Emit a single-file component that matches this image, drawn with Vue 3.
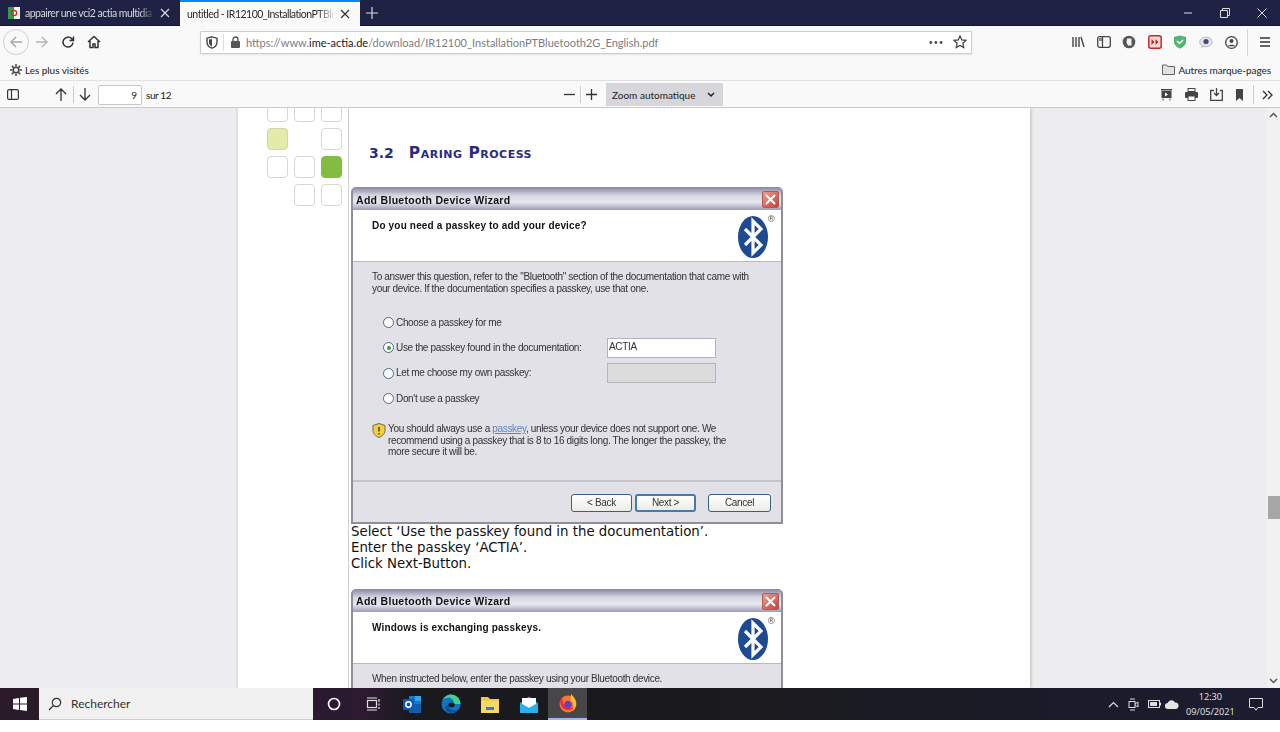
<script setup>
const gridRows = [
  ['', '', ''],
  ['pale', 'none', ''],
  ['', '', 'green'],
  ['none', '', '']
]
const radios = [
  { label: 'Choose a passkey for me', on: false },
  { label: 'Use the passkey found in the documentation:', on: true, field: 'ACTIA' },
  { label: 'Let me choose my own passkey:', on: false, field: '', off: true },
  { label: "Don't use a passkey", on: false }
]
</script>

<template>
  <div class="screen">
    <svg width="0" height="0" class="defs">
      <symbol id="bt" viewBox="0 0 44 48">
        <ellipse cx="16" cy="24" rx="15" ry="21" fill="#1d4a90" />
        <path d="M8 16 L24 32 L16 40 L16 8 L24 16 L8 32" fill="none" stroke="#fff" stroke-width="3.2" />
      </symbol>
    </svg>

    <!-- tab strip -->
    <div class="tabs">
      <div class="tab">
        <svg class="fav" width="12" height="12" viewBox="0 0 12 12">
          <rect width="6" height="12" fill="#2f9e4a" />
          <rect x="6" width="6" height="12" fill="#f4f4f4" />
          <circle cx="6" cy="6" r="2.6" fill="none" stroke="#d8232a" stroke-width="1.3" />
        </svg>
        <span class="tab-title">appairer une vci2 actia multidia</span>
        <svg class="tab-x" width="10" height="10" viewBox="0 0 10 10"><path d="M1 1l8 8M9 1l-8 8" stroke="#d8d8de" stroke-width="1.2" /></svg>
      </div>
      <div class="tab active">
        <span class="tab-title">untitled - IR12100_InstallationPTBlu</span>
        <svg class="tab-x" width="10" height="10" viewBox="0 0 10 10"><path d="M1 1l8 8M9 1l-8 8" stroke="#333" stroke-width="1.2" /></svg>
      </div>
      <svg class="newtab" width="12" height="12" viewBox="0 0 12 12"><path d="M6 0v12M0 6h12" stroke="#d8d8de" stroke-width="1.2" /></svg>
      <div class="win">
        <svg width="10" height="10" viewBox="0 0 10 10"><path d="M1 5h8" stroke="#ddd" /></svg>
        <svg width="10" height="10" viewBox="0 0 10 10"><path d="M.5 2.5h7v7h-7zM2.5 2.5v-2h7v7h-2" fill="none" stroke="#ddd" /></svg>
        <svg width="10" height="10" viewBox="0 0 10 10"><path d="M.5.5l9 9M9.5.5l-9 9" stroke="#ddd" /></svg>
      </div>
    </div>

    <!-- navigation -->
    <div class="nav">
      <div class="back">
        <svg width="14" height="14" viewBox="0 0 14 14"><path d="M13 7H2M7 2L2 7l5 5" fill="none" stroke="#a8a8ab" stroke-width="1.4" /></svg>
      </div>
      <div class="nav-btn">
        <svg width="14" height="14" viewBox="0 0 14 14"><path d="M1 7h11M7 2l5 5-5 5" fill="none" stroke="#b4b4b6" stroke-width="1.4" /></svg>
      </div>
      <div class="nav-btn">
        <svg width="14" height="14" viewBox="0 0 14 14"><path d="M12 7.5A5 5 0 1 1 10.4 3.4L12.5 5.5M12.5 1.5v4h-4" fill="none" stroke="#333" stroke-width="1.5" /></svg>
      </div>
      <div class="nav-btn">
        <svg width="14" height="14" viewBox="0 0 14 14"><path d="M1 7l6-5.5L13 7M3 6v6.5h3V9h2v3.5h3V6" fill="none" stroke="#333" stroke-width="1.5" /></svg>
      </div>
      <div class="url">
        <svg class="u-shield" width="12" height="13" viewBox="0 0 12 13"><path d="M6 .8l5 1.4v4c0 3-2 5-5 6-3-1-5-3-5-6v-4z" fill="none" stroke="#444" stroke-width="1.4" /><path d="M6 3v7.5c-2-.8-3-2.2-3-4.2V3.6z" fill="#444" /></svg>
        <span class="u-div"></span>
        <svg class="u-lock" width="11" height="12" viewBox="0 0 11 12"><path d="M3 5V3.5a2.5 2.5 0 0 1 5 0V5" fill="none" stroke="#555" stroke-width="1.4" /><rect x="1" y="5" width="9" height="7" rx="1" fill="#555" /></svg>
        <span class="u-text">https://www.<b>ime-actia.de</b>/download/IR12100_InstallationPTBluetooth2G_English.pdf</span>
        <span class="u-dots">•••</span>
        <svg class="u-star" width="14" height="14" viewBox="0 0 14 14"><path d="M7 1l1.8 3.9 4.2.5-3.1 2.9.8 4.2L7 10.4l-3.7 2.1.8-4.2L1 5.4l4.2-.5z" fill="none" stroke="#444" stroke-width="1.3" /></svg>
      </div>
      <div class="nav-right">
        <svg width="13" height="12" viewBox="0 0 13 12"><path d="M1 1v10M4 1v10M7 1v10M9 1l3 10" stroke="#444" stroke-width="1.4" fill="none" /></svg>
        <svg width="14" height="12" viewBox="0 0 14 12"><rect x=".7" y=".7" width="12.6" height="10.6" rx="2" fill="none" stroke="#444" stroke-width="1.3" /><path d="M5.5 1v10" stroke="#444" stroke-width="1.3" /><rect x="2" y="2" width="3" height="3" fill="#888" /></svg>
        <svg width="14" height="14" viewBox="0 0 14 14"><circle cx="7" cy="7" r="6.3" fill="#555" /><path d="M5 3.5h4.5v7H6L4.5 7.5z" fill="#f4f4f4" /></svg>
        <svg width="14" height="14" viewBox="0 0 14 14"><rect x=".8" y=".8" width="12.4" height="12.4" rx="2" fill="#f3d9d9" stroke="#c32a2a" stroke-width="1.5" /><path d="M3.5 4l3 3-3 3zM7.5 4l3 3-3 3z" fill="#c32a2a" /></svg>
        <svg width="14" height="14" viewBox="0 0 14 14"><path d="M7 .5l6 1.6v4.4c0 3-2.4 5.6-6 7-3.6-1.4-6-4-6-7V2.1z" fill="#4fb56f" /><path d="M4 6l2.5 2.5L10 5" stroke="#fff" stroke-width="1.5" fill="none" /></svg>
        <svg width="14" height="13" viewBox="0 0 14 13"><ellipse cx="7" cy="6" rx="6.3" ry="4.8" fill="#e4e4e8" stroke="#bbb" /><circle cx="7" cy="5.5" r="2.6" fill="#3c4a80" /><path d="M3 9.5L2 12.5l3-2" fill="#bbb" /></svg>
        <svg width="13" height="13" viewBox="0 0 13 13"><circle cx="6.5" cy="6.5" r="5.8" fill="none" stroke="#444" stroke-width="1.3" /><circle cx="6.5" cy="5" r="2" fill="#444" /><path d="M2.8 10.3c.8-2 6.6-2 7.4 0" fill="#444" /></svg>
      </div>
      <span class="nav-div"></span>
      <svg class="burger" width="10" height="10" viewBox="0 0 10 10"><path d="M0 1h10M0 5h10M0 9h10" stroke="#333" stroke-width="1.4" /></svg>
    </div>

    <!-- bookmarks -->
    <div class="marks">
      <svg width="12" height="12" viewBox="0 0 12 12"><circle cx="6" cy="6" r="2.8" fill="none" stroke="#444" stroke-width="1.5" /><path d="M6 0v2.5M6 9.5V12M0 6h2.5M9.5 6H12M1.8 1.8l1.8 1.8M8.4 8.4l1.8 1.8M10.2 1.8L8.4 3.6M3.6 8.4l-1.8 1.8" stroke="#444" stroke-width="1.5" /></svg>
      <span class="m-text">Les plus visités</span>
      <svg class="m-folder" width="13" height="11" viewBox="0 0 13 11"><path d="M.5 10.5V1h4l1 1.5h7v8z" fill="#e2e2e2" stroke="#666" /></svg>
      <span class="m-text m-other">Autres marque-pages</span>
    </div>

    <!-- pdf.js toolbar -->
    <div class="pdfbar">
      <svg class="p-side" width="12" height="11" viewBox="0 0 12 11"><rect x=".6" y=".6" width="10.8" height="9.8" rx="1.5" fill="none" stroke="#333" stroke-width="1.2" /><path d="M4.5 1v9" stroke="#333" stroke-width="1.2" /></svg>
      <svg class="p-up" width="12" height="13" viewBox="0 0 12 13"><path d="M6 13V1M1 6l5-5 5 5" fill="none" stroke="#333" stroke-width="1.3" /></svg>
      <span class="p-div"></span>
      <svg width="12" height="13" viewBox="0 0 12 13"><path d="M6 0v12M1 7l5 5 5-5" fill="none" stroke="#333" stroke-width="1.3" /></svg>
      <span class="p-num">9</span>
      <span class="p-of">sur 12</span>
      <svg class="p-minus" width="11" height="11" viewBox="0 0 11 11"><path d="M0 5.5h11" stroke="#333" stroke-width="1.3" /></svg>
      <span class="p-div p-div2"></span>
      <svg class="p-plus" width="11" height="11" viewBox="0 0 11 11"><path d="M0 5.5h11M5.5 0v11" stroke="#333" stroke-width="1.3" /></svg>
      <div class="p-zoom">
        <span>Zoom automatique</span>
        <svg width="8" height="6" viewBox="0 0 8 6"><path d="M1 1l3 3 3-3" fill="none" stroke="#222" stroke-width="1.5" /></svg>
      </div>
      <div class="p-tools">
        <svg width="13" height="13" viewBox="0 0 13 13"><rect x="1" y="1" width="11" height="1.5" fill="#444" /><rect x="1.5" y="3" width="10" height="7" fill="#444" /><path d="M5 4.5l3 2-3 2z" fill="#fff" /><path d="M3 10.5v2M10 10.5v2" stroke="#444" /></svg>
        <svg width="13" height="13" viewBox="0 0 13 13"><rect x="3" y=".5" width="7" height="3" fill="none" stroke="#444" /><rect y="4" width="13" height="6" rx="1" fill="#444" /><rect x="3" y="8" width="7" height="4.5" fill="#fff" stroke="#444" /></svg>
        <svg width="13" height="13" viewBox="0 0 13 13"><path d="M4 2.5H.7v9.800h11.600V2.500H10" fill="none" stroke="#444" stroke-width="1.3" /><path d="M6.500 0v7M4 5l2.500 2.500L9 5" fill="none" stroke="#444" stroke-width="1.3" /></svg>
        <svg width="9" height="12" viewBox="0 0 9 12"><path d="M1 0h7v12L4.500 9 1 12z" fill="#444" /></svg>
      </div>
      <span class="p-div p-div3"></span>
      <svg class="p-more" width="11" height="10" viewBox="0 0 11 10"><path d="M1 1l4 4-4 4M6 1l4 4-4 4" fill="none" stroke="#333" stroke-width="1.3" /></svg>
    </div>

    <!-- document -->
    <div class="viewer">
      <div class="stage">
        <div class="page">
          <div class="cells">
            <template v-for="(row, r) in gridRows" :key="r">
              <span v-for="(c, i) in row" :key="i" class="cell" :class="c"></span>
            </template>
          </div>
          <div class="doc">
            <h2 class="heading"><span class="h-num">3.2</span><span class="h-text">Paring Process</span></h2>

            <div class="dialog">
              <div class="d-title">
                <span>Add Bluetooth Device Wizard</span>
                <span class="d-close"><svg width="11" height="11" viewBox="0 0 11 11"><path d="M1 1l9 9M10 1l-9 9" stroke="#fff" stroke-width="2" /></svg></span>
              </div>
              <div class="d-head">
                <b>Do you need a passkey to add your device?</b>
                <svg class="d-logo" width="44" height="48" viewBox="0 0 44 48"><use href="#bt" /></svg>
                <span class="d-reg">®</span>
              </div>
              <div class="d-body">
                <p class="d-intro">To answer this question, refer to the "Bluetooth" section of the documentation that came with<br />your device. If the documentation specifies a passkey, use that one.</p>
                <div class="d-radios">
                  <div v-for="o in radios" :key="o.label" class="d-radio">
                    <span class="dot" :class="{ on: o.on }"></span>
                    <span class="r-label">{{ o.label }}</span>
                    <span v-if="o.field !== undefined" class="field" :class="{ off: o.off }">{{ o.field }}</span>
                  </div>
                </div>
                <div class="d-note">
                  <svg width="14" height="15" viewBox="0 0 14 15"><path d="M7 .5l6 2v5c0 3-2.500 5.500-6 7-3.500-1.500-6-4-6-7v-5z" fill="#f2cf3b" stroke="#6b6b50" /><path d="M7 4v4.500M7 10v1.500" stroke="#444" stroke-width="1.5" /></svg>
                  <p>You should always use a <a>passkey</a>, unless your device does not support one. We<br />recommend using a passkey that is 8 to 16 digits long. The longer the passkey, the<br />more secure it will be.</p>
                </div>
              </div>
              <div class="d-foot">
                <span class="btn">&lt; Back</span>
                <span class="btn def">Next &gt;</span>
                <span class="btn cancel">Cancel</span>
              </div>
            </div>

            <p class="steps">Select ‘Use the passkey found in the documentation’.<br />Enter the passkey ‘ACTIA’.<br />Click Next-Button.</p>

            <div class="dialog second">
              <div class="d-title">
                <span>Add Bluetooth Device Wizard</span>
                <span class="d-close"><svg width="11" height="11" viewBox="0 0 11 11"><path d="M1 1l9 9M10 1l-9 9" stroke="#fff" stroke-width="2" /></svg></span>
              </div>
              <div class="d-head">
                <b>Windows is exchanging passkeys.</b>
                <svg class="d-logo" width="44" height="48" viewBox="0 0 44 48"><use href="#bt" /></svg>
                <span class="d-reg">®</span>
              </div>
              <div class="d-body">
                <p class="d-intro">When instructed below, enter the passkey using your Bluetooth device.</p>
              </div>
            </div>
          </div>
        </div>
      </div>
      <div class="scroll">
        <svg width="9" height="6" viewBox="0 0 9 6"><path d="M1 5l3.500-3.500L8 5" fill="none" stroke="#555" stroke-width="1.5" /></svg>
        <span class="thumb"></span>
        <svg class="s-down" width="9" height="6" viewBox="0 0 9 6"><path d="M1 1l3.500 3.500L8 1" fill="none" stroke="#555" stroke-width="1.5" /></svg>
      </div>
    </div>

    <!-- windows taskbar -->
    <div class="taskbar">
      <div class="start">
        <svg width="14" height="14" viewBox="0 0 14 14"><path d="M0 2l6-1v5.500H0zM7 .8L14 0v6.500H7zM0 7.500h6V13l-6-1zM7 7.500h7V14l-7-1z" fill="#fff" /></svg>
      </div>
      <div class="search">
        <svg width="14" height="14" viewBox="0 0 14 14"><circle cx="8.500" cy="5.500" r="4.200" fill="none" stroke="#333" stroke-width="1.2" /><path d="M5.500 8.500L1 13" stroke="#333" stroke-width="1.2" /></svg>
        <span>Rechercher</span>
      </div>
      <div class="apps">
        <span class="app"><svg width="14" height="14" viewBox="0 0 14 14"><circle cx="7" cy="7" r="5.500" fill="none" stroke="#fff" stroke-width="1.6" /></svg></span>
        <span class="app"><svg width="14" height="14" viewBox="0 0 14 14"><path d="M1 1h10M1 13h10" stroke="#ddd" stroke-width="1.2" /><rect x="1.500" y="3.500" width="9" height="7" fill="none" stroke="#ddd" stroke-width="1.2" /><path d="M13 2v3M13 6.500v2M13 10v2" stroke="#ddd" stroke-width="1.2" /></svg></span>
        <span class="app"><svg width="20" height="20" viewBox="0 0 20 20"><path d="M7 2h12v14H7z" fill="#1a76cf" /><path d="M13 2h6v5h-6z" fill="#35a8ea" /><path d="M7 10l12 0v9H7z" fill="#0f5fae" /><rect x="1" y="5" width="11" height="11" rx="1" fill="#0a5bb0" /><circle cx="6.500" cy="10.500" r="2.700" fill="none" stroke="#fff" stroke-width="1.5" /></svg></span>
        <span class="app"><svg width="20" height="20" viewBox="0 0 20 20"><circle cx="10" cy="10" r="9.500" fill="#1173c6" /><path d="M19.500 10c0-5-4-9.500-9.500-9.500C6 .5 3 3 1.500 6 4 3.500 9 3 11.500 5.500c1.500 1.500 1.500 3 1 4.500h7z" fill="#3fd28a" /><path d="M7 11c0 4 4 6 8 5 1-.3 2-.8 3-1.700-2 5-9 6-12.500 2.500C3.500 15 4 11 7 11z" fill="#0f4c97" /><ellipse cx="10.500" cy="11" rx="3.200" ry="2.400" fill="#1a1a1f" /></svg></span>
        <span class="app"><svg width="18" height="17" viewBox="0 0 18 17"><path d="M0 1h7l2 2h9v14H0z" fill="#f2c84b" /><rect y="5" width="18" height="12" fill="#f8d76c" /><rect x="5" y="11" width="8" height="3" fill="#2d82c4" /></svg></span>
        <span class="app"><svg width="20" height="17" viewBox="0 0 20 17"><path d="M1 7l9-6.500L19 7v10H1z" fill="#1e97da" /><path d="M3 2h14v6l-7 4-7-4z" fill="#fff" /><path d="M1 7l9 6 9-6v10H1z" fill="#2bb0ea" /></svg></span>
        <span class="app current"><svg width="20" height="20" viewBox="0 0 20 20"><circle cx="10" cy="11" r="8.500" fill="#f5792a" /><path d="M13 1c2 2 5 5 5 10 0 3-2 6-4 7 2-3 2-7 0-10-.5 1-1 1.500-2 1.500 1-3 1-6 1-8.500z" fill="#fdc033" /><circle cx="10" cy="11.500" r="3.800" fill="#6e3cc0" /><path d="M2 7c0 5 3 10 8 10 3 0 5-1 6-3-2 1.500-6 1.500-8 0-3-2-4-5-3-8z" fill="#e5284e" /></svg></span>
      </div>
      <div class="tray">
        <svg width="11" height="7" viewBox="0 0 11 7"><path d="M1 6l4.500-4.500L10 6" fill="none" stroke="#ddd" stroke-width="1.2" /></svg>
        <svg class="t-meet" width="11" height="15" viewBox="0 0 11 15"><rect x="1" y="4.500" width="6" height="6" fill="none" stroke="#ddd" /><path d="M7 7l3-2v5L7 8M2 2h5M2 13h5" stroke="#ddd" fill="none" /></svg>
        <svg width="13" height="8" viewBox="0 0 13 8"><rect x=".5" y=".5" width="11" height="7" fill="none" stroke="#ddd" /><rect x="2" y="2" width="7" height="4" fill="#ddd" /><rect x="12" y="2.500" width="1" height="3" fill="#ddd" /></svg>
        <svg class="t-cloud" width="14" height="9" viewBox="0 0 14 9"><path d="M3 9a3 3 0 0 1-.3-6A4 4 0 0 1 10 2.500 3.300 3.300 0 0 1 11 9z" fill="#e4e4e4" /></svg>
      </div>
      <div class="clock"><span>12:30</span><span>09/05/2021</span></div>
      <svg class="notif" width="14" height="13" viewBox="0 0 14 13"><path d="M.5.500h13v9H9L7 12.200 5 9.500H.5z" fill="none" stroke="#ddd" /></svg>
    </div>
  </div>
</template>

<style scoped>
.screen {
  width: 1280px;
  height: 720px;
  display: flex;
  flex-direction: column;
  overflow: hidden;
  font-family: Lato, "Open Sans", sans-serif;
  background: #f9f9fa;
  color: #222;
}
.defs { position: absolute; }
svg { flex: none; display: block; }

.tabs {
  height: 26px;
  flex: none;
  display: flex;
  align-items: center;
  background: #1f2244;
  border-bottom: 1px solid #14162e;
  box-sizing: border-box;
  font-size: 10.5px;
  letter-spacing: -.5px;
}
.tab {
  width: 180px;
  height: 26px;
  box-sizing: border-box;
  padding: 0 10px 0 8px;
  display: flex;
  align-items: center;
  color: #d6d6de;
}
.tab.active {
  padding-left: 7px;
  background: #f9f9fa;
  border-top: 2px solid #0a84ff;
  color: #2a2a2a;
}
.fav { margin-right: 5px; }
.tab-title {
  flex: 1;
  white-space: nowrap;
  overflow: hidden;
  -webkit-mask-image: linear-gradient(to right, #000 88%, transparent);
  mask-image: linear-gradient(to right, #000 88%, transparent);
}
.tab-x { margin-left: 5px; }
.newtab { margin-left: 6px; }
.win {
  margin-left: auto;
  display: flex;
  gap: 27px;
  padding-right: 13px;
}

.nav {
  height: 32px;
  flex: none;
  display: flex;
  align-items: center;
  padding-left: 3px;
}
.back {
  width: 26px;
  height: 26px;
  box-sizing: border-box;
  border: 1px solid #d0d0d4;
  border-radius: 50%;
  display: flex;
  align-items: center;
  justify-content: center;
}
.nav-btn {
  width: 26px;
  display: flex;
  justify-content: center;
}
.url {
  width: 772px;
  height: 23px;
  margin-left: 93px;
  box-sizing: border-box;
  background: #fff;
  border: 1px solid #cdcdd0;
  box-shadow: 0 1px 2px rgba(0, 0, 0, .08);
  border-radius: 1px;
  display: flex;
  align-items: center;
  padding-left: 5px;
  font-size: 11px;
  color: #7c7c80;
}
.u-div { width: 1px; height: 17px; background: #dcdcde; margin: 0 6px 0 5px; }
.u-text { margin-left: 5px; white-space: nowrap; }
.u-text b { font-weight: 400; color: #1a1a1a; }
.u-dots { margin-left: auto; font-size: 7px; letter-spacing: 1px; color: #444; }
.u-star { margin: 0 4px 0 9px; }
.nav-right {
  margin-left: 100px;
  width: 166px;
  display: flex;
  align-items: center;
  gap: 11.6px;
}
.nav-div { width: 1px; height: 27px; background: #d4d4d6; margin-left: 9px; }
.burger { margin-left: 12px; }

.marks {
  height: 23px;
  flex: none;
  display: flex;
  align-items: center;
  padding: 1px 0 0 10px;
  font-size: 10px;
  letter-spacing: -.05px;
  border-bottom: 1px solid #e0e0e2;
  box-sizing: border-box;
}
.m-text { margin-left: 3px; }
.m-folder { margin-left: auto; }
.m-other { margin-right: 9px; }

.pdfbar {
  height: 27px;
  flex: none;
  display: flex;
  align-items: center;
  padding: 1px 0 0 7px;
  font-size: 10px;
  border-bottom: 1px solid #c9c9cc;
  box-sizing: border-box;
}
.p-up { margin-left: 36px; }
.p-div { width: 1px; height: 17px; background: #ccc; margin: 0 5px 0 6px; }
.p-num {
  width: 44px;
  height: 20px;
  margin-left: 7px;
  box-sizing: border-box;
  border: 1px solid #c8c8ca;
  border-radius: 2px;
  background: #fff;
  text-align: right;
  padding-right: 4px;
  line-height: 18px;
}
.p-of { margin-left: 4px; width: 28px; white-space: nowrap; letter-spacing: -.4px; }
.p-minus { margin-left: 390px; }
.p-div2 { margin: 0 5px; }
.p-zoom {
  width: 117px;
  height: 23px;
  margin-left: 9px;
  box-sizing: border-box;
  background: #d7d7db;
  display: flex;
  align-items: center;
  justify-content: space-between;
  padding: 0 8px 0 6px;
}
.p-tools {
  margin-left: 437px;
  display: flex;
  align-items: center;
  gap: 12px;
}
.p-div3 { margin: 0 0 0 9px; height: 19px; }
.p-more { margin-left: 8px; }

.viewer {
  flex: 1;
  min-height: 0;
  display: flex;
  background: #ededf0;
}
.stage {
  flex: 1;
  min-width: 0;
  padding-left: 237px;
  overflow: hidden;
}
.page {
  width: 793px;
  height: 100%;
  box-sizing: border-box;
  background: #fff;
  border-left: 1px solid #dcdcde;
  box-shadow: 1px 0 3px rgba(0, 0, 0, .22);
  display: flex;
  overflow: hidden;
}
.cells {
  width: 80px;
  margin: -8px 0 0 29px;
  display: grid;
  grid-template-columns: repeat(3, 21px);
  grid-auto-rows: 22px;
  gap: 6px;
  align-content: start;
  flex: none;
}
.cell {
  border: 1px solid #d6d6d6;
  border-radius: 4px;
  background: #fff;
}
.cell.pale { background: #e2ebaa; border-color: #d0d6a8; }
.cell.green { background: #82bc42; border-color: #82bc42; }
.cell.none { visibility: hidden; }

.doc {
  margin-left: 1px;
  padding-left: 2px;
  border-left: 1px solid #cfcfcf;
  width: 440px;
  flex: none;
}
.heading {
  margin: 36px 0 25px 18px;
  font: 700 14px/18px "DejaVu Sans", Verdana, sans-serif;
  color: #2a2c82;
  white-space: nowrap;
}
.h-num { margin-right: 15px; }
.h-text {
  font-size: 15.5px;
  font-variant: small-caps;
  letter-spacing: .5px;
}

.dialog {
  width: 432px;
  box-sizing: border-box;
  border: 2px solid #8f8f9c;
  border-top-width: 1px;
  border-radius: 5px 5px 0 0;
  background: #e1e1e7;
  font: 10px/11.5px "Liberation Sans", Arial, sans-serif;
  letter-spacing: -.34px;
  color: #333;
  filter: blur(.3px);
}
.dialog.second { height: 140px; }
.d-title {
  height: 22px;
  box-sizing: border-box;
  padding: 1px 2px 0 3px;
  display: flex;
  align-items: center;
  justify-content: space-between;
  background: linear-gradient(#8f8faa, #d8d8e4 35%, #e8e8f0 65%, #9c9cb4);
  font: 700 10.5px "Liberation Sans", Tahoma, sans-serif;
  color: #111;
  letter-spacing: .3px;
}
.d-close {
  width: 17px;
  height: 17px;
  border-radius: 2px;
  background: linear-gradient(135deg, #e8a090, #c8403a);
  border: 1px solid #b05a50;
  box-sizing: border-box;
  display: flex;
  align-items: center;
  justify-content: center;
}
.d-head {
  height: 52px;
  box-sizing: border-box;
  background: #fff;
  border-bottom: 1px solid #b8b8c0;
  padding: 10px 0 0 19px;
  position: relative;
  font: 700 10px/12px "Liberation Sans", Tahoma, sans-serif;
  letter-spacing: .17px;
  color: #111;
}
.d-logo { position: absolute; right: 0; top: 3px; }
.d-reg {
  position: absolute;
  right: 5px;
  top: 4px;
  font: 9px/10px "DejaVu Sans", sans-serif;
  color: #666;
}
.d-body { padding: 9px 19px 0; }
.d-intro { margin: 0; white-space: nowrap; }
.d-radios { margin-top: 16px; padding-left: 11px; }
.d-radio {
  height: 25.3px;
  display: flex;
  align-items: center;
}
.dot {
  width: 11px;
  height: 11px;
  box-sizing: border-box;
  border: 1px solid #4a6a8a;
  border-radius: 50%;
  background: #fff;
  margin-right: 2px;
  display: flex;
  align-items: center;
  justify-content: center;
}
.dot.on::after {
  content: "";
  width: 4px;
  height: 4px;
  border-radius: 50%;
  background: #3a9a3a;
}
.r-label { white-space: nowrap; }
.field {
  width: 109px;
  height: 20px;
  margin-left: auto;
  margin-right: 46px;
  box-sizing: border-box;
  background: #fff;
  border: 1px solid #b4b4ba;
  padding: 2px 1px;
}
.field.off { background: #dcdcdc; }
.d-note {
  margin-top: 12px;
  display: flex;
  gap: 2px;
}
.d-note p { margin: 0; white-space: nowrap; }
.d-note a { color: #5a84c0; text-decoration: underline; }
.d-foot {
  margin-top: 22px;
  height: 42px;
  box-sizing: border-box;
  border-top: 2px solid #c4c4ca;
  display: flex;
  align-items: center;
  padding: 3px 9px 0 218px;
  gap: 3px;
}
.btn {
  width: 61px;
  height: 18px;
  box-sizing: border-box;
  border: 1px solid #3b5f80;
  border-radius: 3px;
  background: linear-gradient(#fff, #ecece6);
  text-align: center;
  line-height: 16px;
}
.btn.def { border-width: 2px; border-color: #4a78a8; line-height: 14px; }
.btn.cancel { width: 63px; margin-left: 9px; }

.steps {
  margin: 0 0 17px;
  font: 13.33px/16px "DejaVu Sans", Verdana, sans-serif;
  color: #111;
  white-space: nowrap;
}

.scroll {
  width: 13px;
  flex: none;
  display: flex;
  flex-direction: column;
  align-items: center;
  padding-top: 4px;
  box-sizing: border-box;
  background: #f1f1f2;
}
.thumb {
  width: 12px;
  height: 23px;
  margin-top: 378px;
  background: #a6a6a6;
}
.s-down { margin-top: auto; margin-bottom: 4px; }

.taskbar {
  height: 32px;
  flex: none;
  display: flex;
  align-items: center;
  background: linear-gradient(to right, #2b1a2a, #2b1a30 29%, #1a191e 32%, #1a1a1f 60%, #1b1c30);
  color: #e6e6e6;
}
.start {
  width: 39px;
  display: flex;
  justify-content: center;
}
.search {
  width: 274px;
  height: 32px;
  box-sizing: border-box;
  background: #f1f1f1;
  border-bottom: 1px solid #ccc;
  display: flex;
  align-items: center;
  gap: 9px;
  padding-left: 9px;
  color: #333;
  font-size: 12px;
}
.apps { display: flex; padding-left: 1px; }
.app {
  width: 39px;
  height: 32px;
  display: flex;
  align-items: center;
  justify-content: center;
}
.app.current {
  background: #47474a;
  border-bottom: 2px solid #aab0ee;
  box-sizing: border-box;
}
.tray {
  margin-left: 521px;
  display: flex;
  align-items: center;
  gap: 9px;
}
.t-cloud { margin-left: -5px; }
.clock {
  display: flex;
  flex-direction: column;
  align-items: center;
  margin-left: 7px;
  font: 9.2px/15px "Open Sans", sans-serif;
}
.notif { margin-left: 14px; }
</style>

<style>
html, body { background: #fff; }
</style>
